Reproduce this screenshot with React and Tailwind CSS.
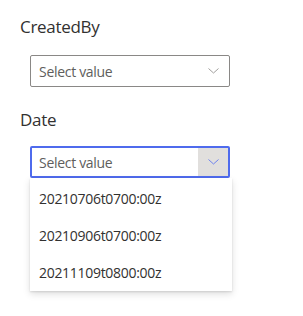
import React from 'react';

const Chevron = ({ color }) => (
  <svg width="11" height="6" viewBox="0 0 11 6" fill="none">
    <path d="M0.5 0.5 L5.5 5 L10.5 0.5" stroke={color} strokeWidth="1" />
  </svg>
);

const options = ['20210706t0700:00z', '20210906t0700:00z', '20211109t0800:00z'];

export default function App() {
  return (
    <div
      className="w-[303px] h-[316px] bg-white pt-[15px] pl-[20px] flex flex-col text-[#323130]"
      style={{ fontFamily: '"Open Sans", "Noto Sans", sans-serif' }}
    >
      {/* CreatedBy */}
      <label className="text-[17px] leading-[24px] tracking-[-0.3px]">CreatedBy</label>
      <div className="ml-[10px] mt-[16px] w-[200px] h-[32px] border border-[#8a8886] rounded-[2px] flex items-center justify-between">
        <span className="pl-[8px] text-[14px] tracking-[-0.3px] text-[#605e5c]">Select value</span>
        <div className="w-[32px] h-full flex items-center justify-center">
          <Chevron color="#a19f9d" />
        </div>
      </div>

      {/* Date */}
      <label className="mt-[21px] text-[17px] leading-[24px] tracking-[-0.3px]">Date</label>
      <div className="relative ml-[10px] mt-[14px] w-[200px]">
        <div className="h-[32px] border-2 border-[#4f6bed] rounded-[2px] flex items-center justify-between">
          <span className="pl-[7px] text-[14px] tracking-[-0.3px] text-[#605e5c]">Select value</span>
          <div className="w-[30px] h-full bg-[#e1dfdd] flex items-center justify-center">
            <Chevron color="#6f83ee" />
          </div>
        </div>
        <div className="absolute left-0 top-full w-[202px] bg-white pt-[2px] shadow-[0_3.2px_7.2px_rgba(0,0,0,0.132),0_0.6px_1.8px_rgba(0,0,0,0.108)]">
          {options.map((o) => (
            <div key={o} className="h-[37px] pl-[9px] flex items-center text-[14px] tracking-[-0.3px] text-[#323130]">
              {o}
            </div>
          ))}
        </div>
      </div>
    </div>
  );
}
